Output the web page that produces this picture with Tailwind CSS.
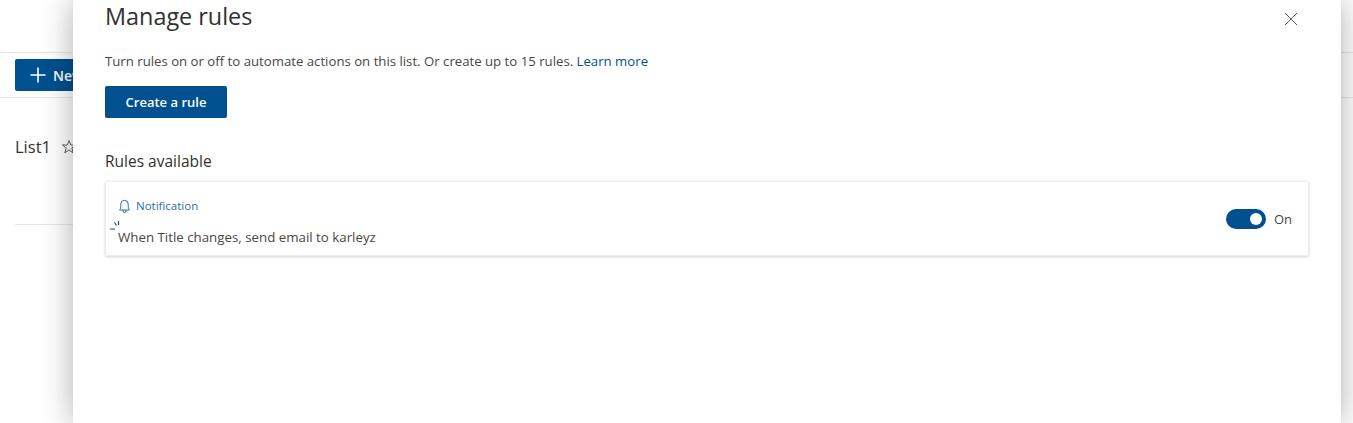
<!DOCTYPE html>
<html lang="en">
<head>
  <meta charset="UTF-8" />
  <title>Manage rules</title>
  <script src="https://cdn.jsdelivr.net/npm/@tailwindcss/browser@4"></script>
</head>
<body class="bg-white font-['Open_Sans',sans-serif] text-[#484644]">
  <div class="relative h-[423px] w-full overflow-hidden">

    <!-- Page behind the panel -->
    <div class="pt-[52px]">
      <div class="flex h-[46px] items-center border-y border-[#e6e6e6] px-[15px]">
        <div class="flex h-[32px] w-[100px] items-center gap-[7px] rounded-[2px] bg-[#01508f] pl-[15px] text-[14px] font-semibold text-white">
          <svg width="16" height="16" viewBox="0 0 16 16" fill="none" stroke="currentColor" stroke-width="1.6"><path d="M8 0.5V15.5M0.5 8H15.5"/></svg>
          <span>New</span>
        </div>
      </div>
      <div class="mx-[15px] flex h-[127px] items-start gap-[10px] border-b border-[#e6e6e6] pt-[37px]">
        <span class="text-[16.5px] font-medium leading-[24px] text-[#323130]">List1</span>
        <svg class="mt-[4px]" width="16" height="16" viewBox="0 0 16 16" fill="none" stroke="#605e5c" stroke-width="1"><path d="M8 1.6L9.8 6H14.6L10.8 9L12.2 13.8L8 11L3.8 13.8L5.2 9L1.4 6H6.2Z"/></svg>
      </div>
    </div>

    <!-- Manage rules panel -->
    <div class="absolute top-0 bottom-0 left-[73px] w-[1268px] bg-white px-[32px] shadow-[0_0_30px_rgba(0,0,0,0.32)]">
      <div class="flex h-[34px] items-center justify-between">
        <h1 class="mt-[-2px] text-[23.4px] font-medium leading-[34px] text-[#323130]">Manage rules</h1>
        <svg class="mt-[3px] mr-[11px]" width="14" height="14" viewBox="0 0 14 14" fill="none" stroke="#605e5c" stroke-width="1"><path d="M1 1L13 13M13 1L1 13"/></svg>
      </div>
      <p class="mt-[17px] text-[13.2px] leading-[20px]">Turn rules on or off to automate actions on this list. Or create up to 15 rules. <span class="text-[#01508f]">Learn more</span></p>
      <button class="mt-[15px] block h-[32px] w-[122px] rounded-[2px] bg-[#01508f] pt-[1px] text-[13px] font-semibold text-white">Create a rule</button>
      <h2 class="mt-[33px] text-[15.5px] font-medium leading-[20px] text-[#323130]">Rules available</h2>
      <div class="mt-[10px] flex h-[75px] w-[1204px] items-center justify-between rounded-[2px] border border-[#eeeeee] shadow-[0_1px_3px_rgba(0,0,0,0.18)]">
        <div class="relative pt-[6px] pl-[12px]">
          <div class="flex items-center gap-[5px] text-[#2b6ea8]">
            <svg width="13" height="15" viewBox="0 0 13 15" fill="none" stroke="currentColor" stroke-width="1"><path d="M1.5 11C2.6 10 2.8 9 2.8 6.5V5A3.7 3.7 0 0 1 10.2 5V6.5C10.2 9 10.4 10 11.5 11ZM5 11V12A1.5 1.5 0 0 0 8 12V11"/></svg>
            <span class="text-[11.5px] leading-[18px]">Notification</span>
          </div>
          <p class="mt-[13px] text-[13.3px] leading-[18px]">When Title changes, send email to karleyz</p>
          <svg class="absolute top-[30px] left-[4px]" width="10" height="10" viewBox="0 0 10 10" fill="none" stroke="#01508f" stroke-width="1.2"><path d="M8.5 0V4M4.5 1.5L6.5 4.5M0 8H5"/></svg>
        </div>
        <div class="flex items-center gap-[8px] pr-[16px]">
          <div class="flex h-[20px] w-[40px] items-center justify-end rounded-full bg-[#01508f] pr-[4px]">
            <div class="h-[12px] w-[12px] rounded-full bg-white"></div>
          </div>
          <span class="text-[13px] leading-[20px]">On</span>
        </div>
      </div>
    </div>

  </div>
</body>
</html>
